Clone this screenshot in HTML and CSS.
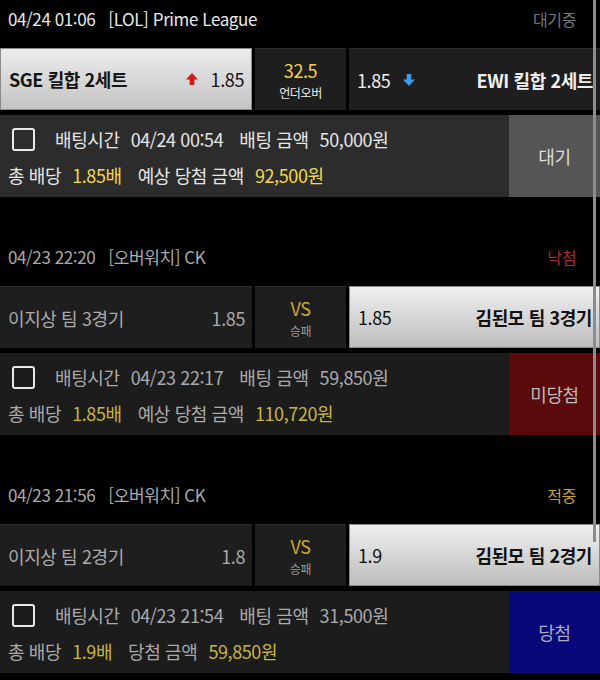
FILE: index.html
```html
<!DOCTYPE html>
<html lang="ko">
<head>
  <meta charset="UTF-8">
  <meta name="viewport" content="width=device-width, initial-scale=1.0">
  <title>배팅내역</title>
  <link rel="stylesheet" href="styles.css">
</head>
<body>
  <div class="history">

    <!-- 1: 대기중 -->
    <div class="bet">
      <div class="bet-head">
        <span class="game">04/24 01:06&nbsp;&nbsp;&nbsp;[LOL] Prime League</span>
        <span class="state wait">대기중</span>
      </div>
      <div class="match">
        <div class="team home picked">
          <span class="name">SGE 킬합 2세트</span>
          <span class="odds">
            <svg class="arrow up" viewBox="0 0 14 14"><path d="M7 1 L13 7.5 H9.3 V13 H4.7 V7.5 H1 Z"/></svg>
            1.85
          </span>
        </div>
        <div class="mid">
          <span class="line">32.5</span>
          <span class="kind">언더오버</span>
        </div>
        <div class="team away">
          <span class="odds">
            1.85
            <svg class="arrow down" viewBox="0 0 14 14"><path d="M7 13 L13 6.5 H9.3 V1 H4.7 V6.5 H1 Z"/></svg>
          </span>
          <span class="name">EWI 킬합 2세트</span>
        </div>
      </div>
      <div class="slip live">
        <div class="slip-info">
          <div class="row">
            <span class="check"></span>
            <span class="lbl">배팅시간</span><span>04/24 00:54</span>
            <span class="lbl">배팅 금액</span><span>50,000원</span>
          </div>
          <div class="row">
            <span class="lbl">총 배당</span><span class="hl">1.85배</span>
            <span class="lbl">예상 당첨 금액</span><span class="hl">92,500원</span>
          </div>
        </div>
        <div class="result pending">대기</div>
      </div>
    </div>

    <!-- 2: 낙첨 -->
    <div class="bet done">
      <div class="bet-head">
        <span class="game">04/23 22:20&nbsp;&nbsp;&nbsp;[오버워치] CK</span>
        <span class="state lose">낙첨</span>
      </div>
      <div class="match">
        <div class="team home">
          <span class="name">이지상 팀 3경기</span>
          <span class="odds">1.85</span>
        </div>
        <div class="mid">
          <span class="line vs">VS</span>
          <span class="kind">승패</span>
        </div>
        <div class="team away picked">
          <span class="odds">1.85</span>
          <span class="name">김된모 팀 3경기</span>
        </div>
      </div>
      <div class="slip">
        <div class="slip-info">
          <div class="row">
            <span class="check"></span>
            <span class="lbl">배팅시간</span><span>04/23 22:17</span>
            <span class="lbl">배팅 금액</span><span>59,850원</span>
          </div>
          <div class="row">
            <span class="lbl">총 배당</span><span class="hl">1.85배</span>
            <span class="lbl">예상 당첨 금액</span><span class="hl">110,720원</span>
          </div>
        </div>
        <div class="result lost">미당첨</div>
      </div>
    </div>

    <!-- 3: 적중 -->
    <div class="bet done">
      <div class="bet-head">
        <span class="game">04/23 21:56&nbsp;&nbsp;&nbsp;[오버워치] CK</span>
        <span class="state win">적중</span>
      </div>
      <div class="match">
        <div class="team home">
          <span class="name">이지상 팀 2경기</span>
          <span class="odds">1.8</span>
        </div>
        <div class="mid">
          <span class="line vs">VS</span>
          <span class="kind">승패</span>
        </div>
        <div class="team away picked">
          <span class="odds">1.9</span>
          <span class="name">김된모 팀 2경기</span>
        </div>
      </div>
      <div class="slip">
        <div class="slip-info">
          <div class="row">
            <span class="check"></span>
            <span class="lbl">배팅시간</span><span>04/23 21:54</span>
            <span class="lbl">배팅 금액</span><span>31,500원</span>
          </div>
          <div class="row">
            <span class="lbl">총 배당</span><span class="hl">1.9배</span>
            <span class="lbl">당첨 금액</span><span class="hl">59,850원</span>
          </div>
        </div>
        <div class="result won">당첨</div>
      </div>
    </div>

  </div>
  <div class="scroll-thumb"></div>
</body>
</html>
```

FILE: styles.css
```css
body {
  margin: 0;
  padding: 0;
  background: #000;
  font-family: "Noto Sans CJK KR", "Noto Sans", sans-serif;
  color: #ddd;
  letter-spacing: -0.4px;
}
.history {
  width: 600px;
}
.bet {
  margin-bottom: 41px;
}
.bet-head {
  height: 48px;
  display: flex;
  justify-content: space-between;
  align-items: flex-start;
  padding: 0 24px 0 8px;
  line-height: 38px;
  font-size: 17px;
}
.game {
  color: #e8e8e8;
}
.done .game {
  color: #aaa;
}
.state {
  font-size: 16px;
}
.wait { color: #777; }
.lose { color: #a82a3a; }
.win { color: #c9a233; }

/* match row */
.match {
  display: grid;
  grid-template-columns: 252px 1fr 251px;
  gap: 3px;
  height: 62px;
}
.team {
  display: flex;
  align-items: center;
  justify-content: space-between;
  padding: 0 7px 0 8px;
  background: #1e1e1e;
  border-top: 1px solid #2c2c2c;
  color: #eee;
  font-size: 18px;
}
.team .name {
  font-weight: 700;
}
.done .team {
  color: #aaa;
}
.done .team .name {
  font-weight: 400;
}
.team.picked {
  background: linear-gradient(#ececec, #c4c4c4);
  border: 1px solid #8a8a8a;
  color: #151515;
}
.done .team.picked {
  background: linear-gradient(#f0f0f0, #bdbdbd);
  color: #111;
}
.done .team.picked .name {
  font-weight: 700;
}
.odds {
  display: flex;
  align-items: center;
  gap: 12px;
}
.arrow {
  width: 14px;
  height: 14px;
}
.arrow.up { fill: #d01818; }
.arrow.down { fill: #3c9ce6; }
.mid {
  display: flex;
  flex-direction: column;
  align-items: center;
  justify-content: center;
  background: #1e1e1e;
  border-top: 1px solid #2c2c2c;
  gap: 1px;
}
.line {
  color: #f5d442;
  font-size: 18px;
  line-height: 26px;
}
.line.vs {
  color: #c9a833;
}
.kind {
  font-size: 12px;
  color: #eee;
  line-height: 18px;
}
.done .kind {
  color: #999;
}

/* slip */
.slip {
  margin-top: 5px;
  height: 82px;
  display: grid;
  grid-template-columns: 1fr 91px;
  background: #1c1c1c;
  color: #aaa;
}
.slip.live {
  background: #2c2c2c;
  color: #e6e6e6;
}
.slip-info {
  display: flex;
  flex-direction: column;
  padding: 12px 8px 0;
  gap: 12px;
  font-size: 18px;
}
.row {
  display: flex;
  align-items: center;
  height: 24px;
}
.row .lbl {
  margin: 0 11px 0 16px;
}
.row .lbl:first-child {
  margin-left: 0;
}
.check {
  width: 19px;
  height: 19px;
  border: 2.5px solid #e8e8e8;
  border-radius: 3px;
  margin: 0 20px 0 4px;
}
.check + .lbl {
  margin-left: 0;
}
.hl {
  color: #c8b446;
}
.live .hl {
  color: #f3d94a;
}
.result {
  display: flex;
  align-items: center;
  justify-content: center;
  font-size: 18px;
  color: #ddd;
}
.pending { background: #555; }
.lost { background: #5a0a0a; color: #bbb; }
.won { background: #08087a; color: #aab; }

.scroll-thumb {
  position: absolute;
  top: 0;
  left: 593px;
  width: 3px;
  height: 542px;
  background: #8c8c8c;
}
```
